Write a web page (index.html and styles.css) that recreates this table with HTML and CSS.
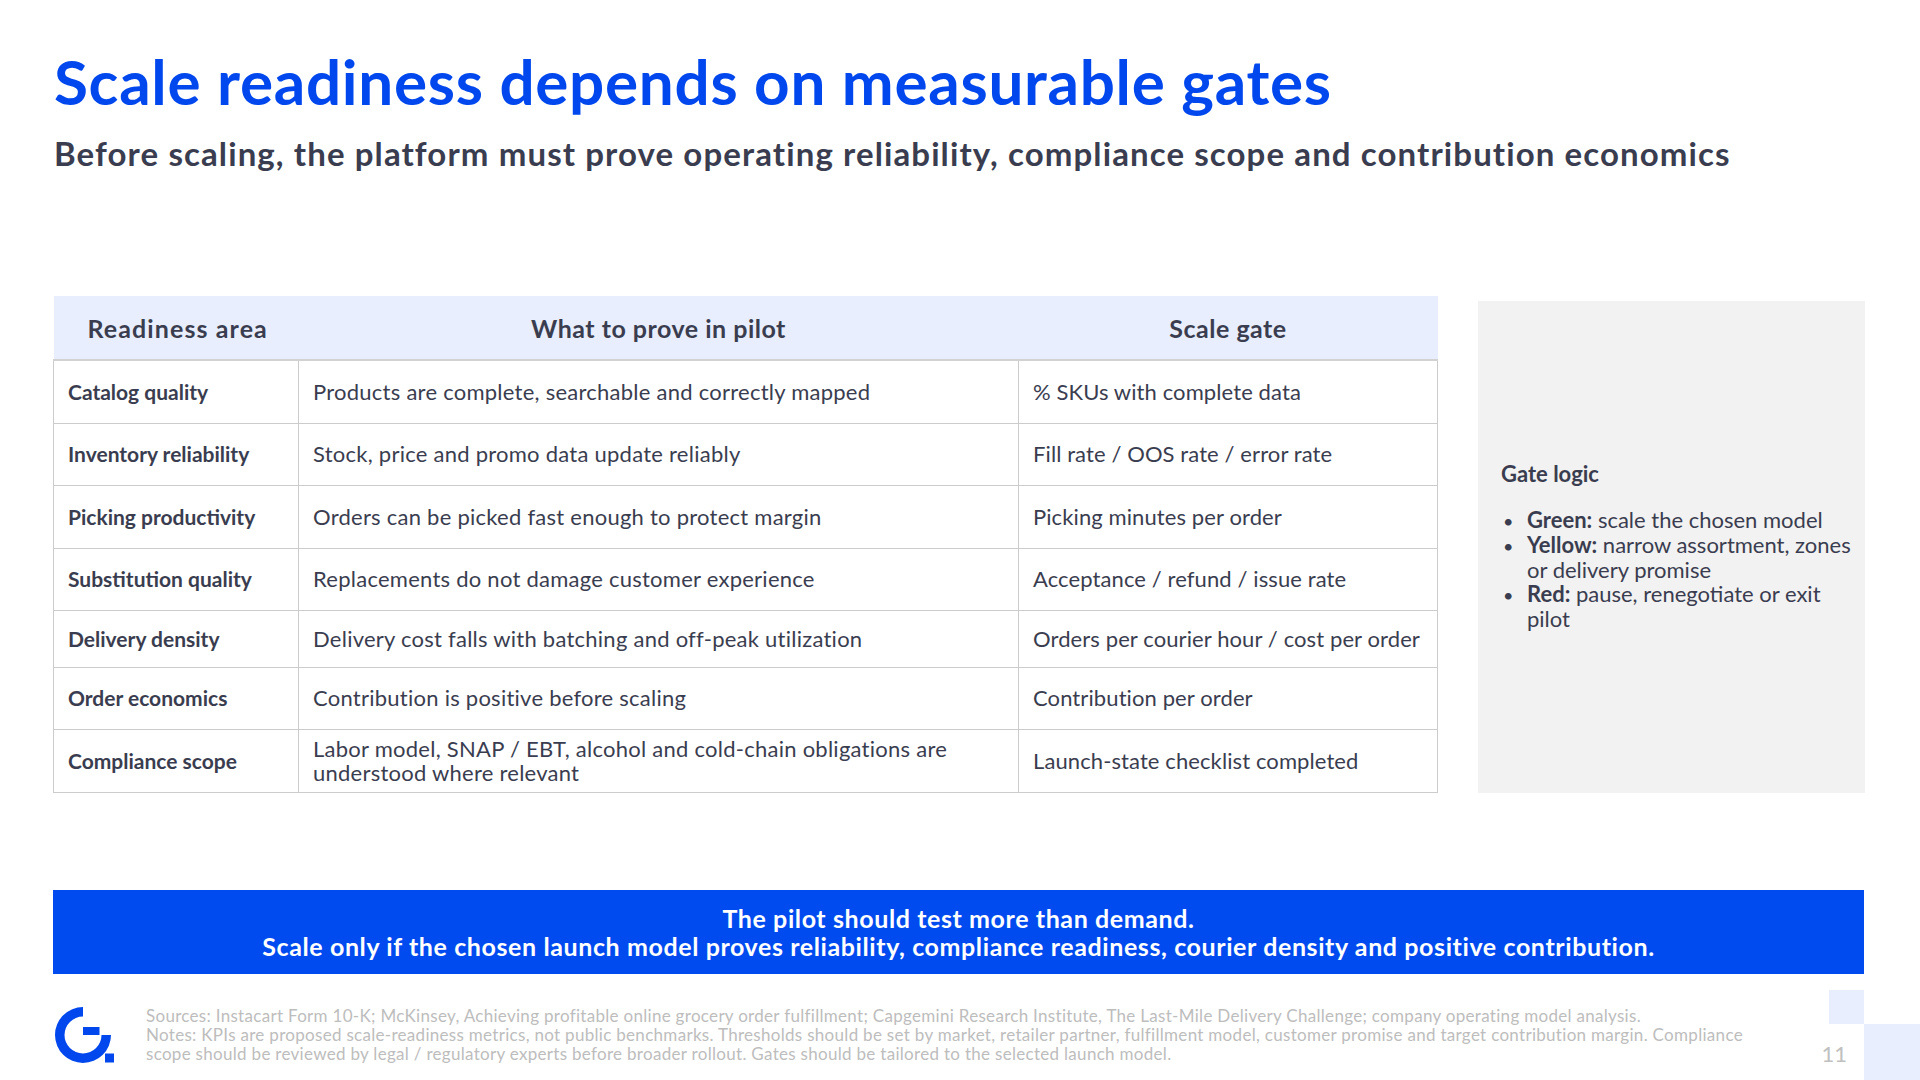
FILE: index.html
```html
<!DOCTYPE html>
<html lang="en">
<head>
<meta charset="utf-8">
<title>Scale readiness depends on measurable gates</title>
<link rel="stylesheet" href="styles.css">
</head>
<body>
<div class="slide">
  <header class="head">
    <h1 class="title">Scale readiness depends on measurable gates</h1>
    <p class="subtitle">Before scaling, the platform must prove operating reliability, compliance scope and contribution economics</p>
  </header>

  <main class="content">
    <table class="grid">
      <colgroup>
        <col class="c1"><col class="c2"><col class="c3">
      </colgroup>
      <thead>
        <tr>
          <th class="th-first">Readiness area</th>
          <th>What to prove in pilot</th>
          <th>Scale gate</th>
        </tr>
      </thead>
      <tbody>
        <tr class="r-a">
          <td class="area">Catalog quality</td>
          <td>Products are complete, searchable and correctly mapped</td>
          <td class="gate">% SKUs with complete data</td>
        </tr>
        <tr class="r-a">
          <td class="area">Inventory reliability</td>
          <td>Stock, price and promo data update reliably</td>
          <td class="gate">Fill rate / OOS rate / error rate</td>
        </tr>
        <tr class="r-a">
          <td class="area">Picking productivity</td>
          <td>Orders can be picked fast enough to protect margin</td>
          <td class="gate">Picking minutes per order</td>
        </tr>
        <tr class="r-a">
          <td class="area">Substitution quality</td>
          <td>Replacements do not damage customer experience</td>
          <td class="gate">Acceptance / refund / issue rate</td>
        </tr>
        <tr class="r-s">
          <td class="area">Delivery density</td>
          <td>Delivery cost falls with batching and off-peak utilization</td>
          <td class="gate">Orders per courier hour / cost per order</td>
        </tr>
        <tr class="r-a">
          <td class="area">Order economics</td>
          <td>Contribution is positive before scaling</td>
          <td class="gate">Contribution per order</td>
        </tr>
        <tr class="r-a">
          <td class="area">Compliance scope</td>
          <td>Labor model, SNAP / EBT, alcohol and cold-chain obligations are understood where relevant</td>
          <td class="gate">Launch-state checklist completed</td>
        </tr>
      </tbody>
    </table>

    <aside class="logic">
      <h2 class="logic-title">Gate logic</h2>
      <ul class="logic-list">
        <li><b>Green:</b> scale the chosen model</li>
        <li><b>Yellow:</b> narrow assortment, zones or delivery promise</li>
        <li><b>Red:</b> pause, renegotiate or exit pilot</li>
      </ul>
    </aside>
  </main>

  <section class="banner">
    <p>The pilot should test more than demand.</p>
    <p>Scale only if the chosen launch model proves reliability, compliance readiness, courier density and positive contribution.</p>
  </section>

  <footer class="foot">
    <svg class="logo" viewBox="0 0 62 58" aria-hidden="true">
      <path fill="#0048EE" d="M29 1 A28 28 0 1 0 57 29 L47.5 29 A18.5 18.5 0 1 1 29 10.5 Z"/>
      <rect fill="#0048EE" x="29" y="21" width="16.5" height="8"/>
      <rect fill="#0048EE" x="51" y="47.5" width="9" height="9"/>
    </svg>
    <div class="notes">
      <p>Sources: Instacart Form 10-K; McKinsey, Achieving profitable online grocery order fulfillment; Capgemini Research Institute, The Last-Mile Delivery Challenge; company operating model analysis.</p>
      <p>Notes: KPIs are proposed scale-readiness metrics, not public benchmarks. Thresholds should be set by market, retailer partner, fulfillment model, customer promise and target contribution margin. Compliance scope should be reviewed by legal / regulatory experts before broader rollout. Gates should be tailored to the selected launch model.</p>
    </div>
    <span class="page">11</span>
  </footer>

  <div class="corner corner-a"></div>
  <div class="corner corner-b"></div>
</div>
</body>
</html>
```

FILE: styles.css
```css
html, body {
  margin: 0;
  padding: 0;
  background: #ffffff;
}

body {
  font-family: Lato, "Liberation Sans", sans-serif;
  color: #3A3D4F;
}

.slide {
  position: relative;
  width: 1920px;
  height: 1080px;
  overflow: hidden;
}

/* Header */
.head {
  padding: 45px 0 0 54px;
}

.title {
  margin: 0;
  font-size: 62px;
  line-height: 72px;
  font-weight: 700;
  letter-spacing: 0.7px;
  color: #0048EE;
}

.subtitle {
  margin: 17px 0 0;
  font-size: 33px;
  line-height: 38px;
  font-weight: 700;
  letter-spacing: 1.1px;
  color: #3A3D4F;
}

/* Content */
.content {
  display: flex;
  align-items: flex-end;
  gap: 40px;
  margin: 124px 0 0 53px;
}

.grid {
  width: 1384px;
  flex: none;
  border-collapse: collapse;
  table-layout: fixed;
}

.c1 { width: 245px; }
.c2 { width: 720px; }
.c3 { width: 419px; }

.grid th {
  height: 63px;
  padding: 0;
  background: #E8EEFD;
  font-size: 25px;
  font-weight: 700;
  letter-spacing: 0.5px;
  text-align: center;
  border-bottom: 2px solid #D2D2D2;
}

.grid th.th-first {
  text-align: left;
  padding-left: 34px;
  letter-spacing: 1.1px;
}

.grid td {
  border: 1px solid #CCCCCC;
  padding: 0 12px 0 14px;
  font-size: 22px;
  line-height: 24px;
  letter-spacing: 0.25px;
  vertical-align: middle;
}

.grid td.area {
  font-size: 21px;
  letter-spacing: 0;
  font-weight: 700;
}

.grid td.gate {
  padding-right: 4px;
  white-space: nowrap;
  letter-spacing: 0.1px;
}

.r-a td { height: 61.5px; }
.r-s td { height: 55.5px; }

/* Gate logic panel */
.logic {
  width: 387px;
  height: 492px;
  flex: none;
  box-sizing: border-box;
  background: #F2F2F2;
  padding: 0 6px 0 23px;
  display: flex;
  flex-direction: column;
  justify-content: center;
}

.logic-title {
  margin: 0 0 22px;
  font-size: 22px;
  line-height: 24px;
  font-weight: 700;
}

.logic-list {
  margin: 0;
  padding: 0;
  list-style: none;
  font-size: 22px;
  line-height: 24px;
  letter-spacing: 0;
}

.logic-list li {
  padding-left: 26px;
  text-indent: -26px;
}

.logic-list li::before {
  content: "\2022";
  display: inline-block;
  width: 26px;
  padding-left: 2px;
  box-sizing: border-box;
  text-indent: 0;
  font-size: 18px;
}

/* Banner */
.banner {
  margin: 97px 56px 0 53px;
  height: 84px;
  background: #004BF0;
  color: #ffffff;
  display: flex;
  flex-direction: column;
  justify-content: center;
  align-items: center;
  font-size: 25px;
  line-height: 28px;
  font-weight: 700;
  letter-spacing: 0.6px;
}

.banner p {
  margin: 0;
}

/* Footer */
.foot {
  display: flex;
  margin-top: 32px;
  padding-left: 54px;
  height: 76px;
}

.logo {
  width: 62px;
  height: 58px;
  flex: none;
}

.notes {
  margin-left: 30px;
  width: 1630px;
  font-size: 17px;
  line-height: 19px;
  letter-spacing: 0.3px;
  color: #BDBDBD;
}

.notes p {
  margin: 0;
}

.page {
  margin-left: auto;
  margin-right: 73px;
  margin-bottom: 16px;
  align-self: flex-end;
  font-size: 22px;
  line-height: 24px;
  font-weight: 400;
  color: #C0C0C0;
}

/* Decorative corner squares */
.corner {
  position: absolute;
  background: #E8EEFD;
}

.corner-a {
  left: 1829px;
  top: 990px;
  width: 35px;
  height: 34px;
}

.corner-b {
  left: 1864px;
  top: 1024px;
  width: 56px;
  height: 56px;
}
```
